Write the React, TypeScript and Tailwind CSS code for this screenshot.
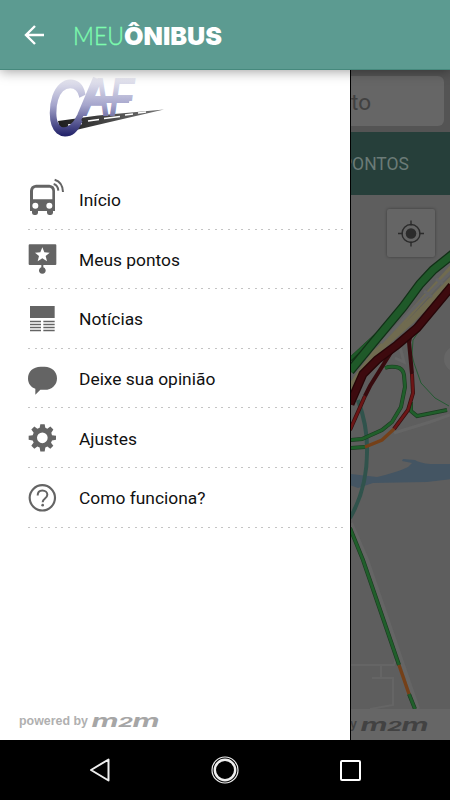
import type { ReactNode } from 'react'

interface IconProps {
	viewBox: string
	children: ReactNode
}

const MenuIcon = ({ viewBox, children }: Readonly<IconProps>) => (
	<svg
		className="h-12 w-10 shrink-0 fill-[#646464]"
		viewBox={viewBox}
		aria-hidden="true"
	>
		{children}
	</svg>
)

const BusIcon = () => (
	<MenuIcon viewBox="36 18 120 144">
		<path
			fillRule="evenodd"
			d="M63 44H103Q120 46 120 62V123H114V129Q113 135 107 135H103Q97 135 96 129V123H69V129Q68 135 62 135H58Q52 135 51 129V123H45V62Q46 46 63 44ZM61 53Q54 54 54 62V88H112V62Q111 54 105 53ZM61 98A9 9 0 1 0 61 116A9 9 0 1 0 61 98ZM103 98A9 9 0 1 0 103 116A9 9 0 1 0 103 98Z"
		/>
		<path
			d="M119 29Q143 36 144 66M116 42Q129 46 130 62"
			fill="none"
			stroke="#646464"
			strokeWidth="6"
		/>
	</MenuIcon>
)

const StopIcon = () => (
	<MenuIcon viewBox="36 196 120 144">
		<path
			fillRule="evenodd"
			d="M44 224H121Q124 224 124 227V283Q124 286 121 286H85V293A10 10 0 1 1 79 293V286H44Q41 286 41 283V227Q41 224 44 224ZM82 233L76 248L60 249L72 259L68 275L82 266L96 275L92 259L104 249L88 248Z"
		/>
	</MenuIcon>
)

const NewsIcon = () => (
	<MenuIcon viewBox="36 16 120 144">
		<path d="M45 49H119V85H45ZM45 93H78V97.5H45ZM85 93H119V97.5H85ZM45 102H78V106.5H45ZM85 102H119V106.5H85ZM45 111H78V115.5H45ZM85 111H119V115.5H85ZM45 120H78V124.5H45ZM85 120H119V124.5H85Z" />
	</MenuIcon>
)

const BubbleIcon = () => (
	<MenuIcon viewBox="36 195.5 120 144">
		<path d="M77 231H89C110 231 126 246 126 265C126 285 111 300 89 300H76L61 315V297C47 292 39 280 39 266C39 246 54 231 77 231Z" />
	</MenuIcon>
)

const GearIcon = () => (
	<MenuIcon viewBox="36 12.6 120 144">
		<path
			fillRule="evenodd"
			d="M76 43H89L91 54L97 57L106 50L115 59L109 69L111 76L123 78V90L111 92L108 99L115 108L106 117L97 110L91 113L89 125H76L74 113L67 110L58 117L49 108L56 98L53 92L41 90V78L53 76L56 69L49 59L58 50L67 57L74 54ZM82 68A16 16 0 1 0 82 100A16 16 0 1 0 82 68Z"
		/>
	</MenuIcon>
)

const HelpIcon = () => (
	<MenuIcon viewBox="36 191.4 120 144">
		<g fill="none" stroke="#646464">
			<circle cx="82" cy="263" r="38" strokeWidth="6.5" />
			<path
				d="M68 256C68 246 74 241 82 241C91 241 97 247 97 254C97 265 83 265 83 276"
				strokeWidth="6"
			/>
		</g>
		<circle cx="83" cy="285" r="4" />
	</MenuIcon>
)

const items = [
	{ label: 'Início', icon: <BusIcon /> },
	{ label: 'Meus pontos', icon: <StopIcon /> },
	{ label: 'Notícias', icon: <NewsIcon /> },
	{ label: 'Deixe sua opinião', icon: <BubbleIcon /> },
	{ label: 'Ajustes', icon: <GearIcon /> },
	{ label: 'Como funciona?', icon: <HelpIcon /> },
]

const Header = () => (
	<header className="relative z-10 flex h-[70px] shrink-0 items-center border-b border-[#46897d] bg-[#5c9b91] pl-6 shadow-[0_1px_12px_rgba(0,0,0,0.4)]">
		<svg
			className="h-5 w-5"
			viewBox="0 0 20 20"
			fill="none"
			stroke="#fff"
			strokeWidth="2.4"
			aria-hidden="true"
		>
			<path d="M20 10H2M11 1L2 10L11 19" />
		</svg>
		<svg
			className="ml-[30px] h-10 w-[150px] overflow-visible"
			viewBox="0 0 150 40"
		>
			<text
				x="-1"
				y="29.5"
				textLength="51"
				lengthAdjust="spacingAndGlyphs"
				stroke="#7dfcae"
				strokeWidth="0.4"
				className="fill-[#7dfcae] font-['Lato'] text-[25.5px] font-light"
			>
				MEU
			</text>
			<text
				x="50"
				y="29.5"
				textLength="98"
				lengthAdjust="spacingAndGlyphs"
				className="fill-white font-['Inter'] text-[25px] font-black"
			>
				ÔNIBUS
			</text>
		</svg>
	</header>
)

const CompanyLogo = () => (
	<svg
		className="ml-12 h-[100px] w-[120px] overflow-visible"
		viewBox="48 70 120 100"
	>
		<defs>
			<linearGradient
				id="letters"
				gradientUnits="userSpaceOnUse"
				x1="0"
				y1="76"
				x2="0"
				y2="135"
			>
				<stop offset="0" stopColor="#f0f0f6" />
				<stop offset="0.5" stopColor="#a4a4cb" />
				<stop offset="1" stopColor="#24246b" />
			</linearGradient>
			<linearGradient id="road">
				<stop offset="0" stopColor="#1c1c1c" />
				<stop offset="1" stopColor="#777" />
			</linearGradient>
		</defs>
		<path d="M58 121L98 115.5L164 109.5L110 122L76 130L60 130Z" fill="url(#road)" />
		<path
			d="M68 125L82 123.5M88 121L99 119.5M104 118.5L120 116.5M125 115L133 114M138 113L146 112"
			stroke="#fff"
			strokeWidth="1.3"
		/>
		{/* swoosh that ties the C to the A, and the bar shared by A and F */}
		<path
			d="M96 78L80 116Q73 131 61 131"
			fill="none"
			stroke="url(#letters)"
			strokeWidth="6"
		/>
		<path d="M91 96H130L129 103H89Z" fill="url(#letters)" />
		<text
			y="134"
			fill="url(#letters)"
			stroke="url(#letters)"
			className="font-['Liberation_Sans'] italic"
		>
			<tspan
				x="48"
				textLength="36"
				lengthAdjust="spacingAndGlyphs"
				strokeWidth="3"
				className="text-[76px]"
			>
				C
			</tspan>
			<tspan
				x="84"
				y="115"
				textLength="49"
				lengthAdjust="spacingAndGlyphs"
				strokeWidth="2"
				className="text-[52px]"
			>
				AF
			</tspan>
		</text>
	</svg>
)

const Brand = ({ className }: Readonly<{ className: string }>) => (
	<svg className={`h-4 w-[68px] overflow-visible ${className}`} viewBox="0 0 68 16">
		<text y="13.5" className="font-['Inter'] font-bold italic">
			<tspan
				x="-0.5"
				textLength="27"
				lengthAdjust="spacingAndGlyphs"
				className="text-[17.5px]"
			>
				m
			</tspan>
			<tspan
				x="26"
				textLength="15"
				lengthAdjust="spacingAndGlyphs"
				className="text-[13.5px]"
			>
				2
			</tspan>
			<tspan
				x="40.5"
				textLength="27"
				lengthAdjust="spacingAndGlyphs"
				className="text-[17.5px]"
			>
				m
			</tspan>
		</text>
	</svg>
)

const Drawer = () => (
	<aside className="flex w-[350px] shrink-0 flex-col bg-white">
		<CompanyLogo />
		<nav>
			{items.map((item) => (
				<div key={item.label} className="flex h-[59.6px] flex-col pl-7">
					<div className="-ml-px flex min-h-0 flex-1 items-center gap-3 pt-px">
						{item.icon}
						<span className="pt-px text-[17.4px] text-[#111]">
							{item.label}
						</span>
					</div>
					<div className="h-px w-[316px] bg-[repeating-linear-gradient(90deg,#c4c4c4_0_2px,transparent_2px_6.67px)]" />
				</div>
			))}
		</nav>
		<footer className="mt-auto flex h-[38px] items-center gap-1 pl-[19px]">
			<span className="w-[69px] font-['Liberation_Sans'] text-[12.4px] font-bold whitespace-nowrap text-[#b0b0b0]">
				powered by
			</span>
			<Brand className="fill-[#a6a6a6]" />
		</footer>
	</aside>
)

const TrafficMap = () => (
	<svg
		className="block h-[514px] w-[100px]"
		viewBox="351 195 100 514"
		fill="none"
	>
		<path
			d="M350 474L377 477Q398 472 408 467L412 463L402 461L403 459L415 460Q420 463 430 464H452V479L427 482L373 483L358 488L350 485Z"
			fill="#445563"
		/>
		<g stroke="#656565">
			<path d="M351 523L367 560L418 709" strokeWidth="4" />
			<path
				d="M350 665H394L398 652M381 666V678M372 678H393V705L370 709"
				strokeWidth="2"
			/>
			<path d="M394 433L430 422L450 415M400 347L404 362L395 358" strokeWidth="3" />
		</g>
		<circle cx="457" cy="359" r="13" fill="#666" />
		<path
			d="M350 395Q354 379 367 363L400 325L452 267"
			stroke="#706b50"
			strokeWidth="5"
		/>
		<path
			d="M352 385L375 353L412 320L452 279"
			stroke="#706b50"
			strokeWidth="6"
		/>
		<path
			d="M381 343L410 312L452 271M424 291L432 297M436 279L443 284"
			stroke="#646464"
			strokeWidth="3"
		/>
		<path
			d="M358 400Q367 425 367 447Q368 487 350 518"
			stroke="#30534c"
			strokeWidth="4"
		/>
		<path d="M350 360L377 335" stroke="#123d18" strokeWidth="5" />
		<path d="M350 359L377 334" stroke="#1f5929" strokeWidth="3" />
		<path
			d="M350 371L373 343L403 307L420 284L433 270L453 254"
			stroke="#123017"
			strokeWidth="9.5"
		/>
		<path
			d="M350 371L373 343L403 307L420 284L433 270L453 254"
			stroke="#1f5929"
			strokeWidth="7"
		/>
		<path
			d="M421 328L413 340L412 355L414 363L421 383L435 398L449 406"
			stroke="#245a32"
			strokeWidth="1"
		/>
		<g stroke="#1b3b20" strokeWidth="4">
			<path d="M385 368Q390 366 396 367Q403 368 404 375L405 387L401 407L392 422L382 430L362 439L350 440" />
			<path d="M411 402V411L417 416L447 410" />
			<path d="M350 448L365 447" />
			<path d="M350 528L363 560L399 665M409 694L415 709" />
		</g>
		<g stroke="#205f2b" strokeWidth="2.8">
			<path d="M385 368Q390 366 396 367Q403 368 404 375L405 387L401 407L392 422L382 430L362 439L350 440" />
			<path d="M411 402V411L417 416L447 410" />
			<path d="M350 448L365 447" />
			<path d="M350 528L363 560L399 665M409 694L415 709" />
		</g>
		<path
			d="M412 374L413 393L408 410L394 429M365 396L350 430"
			stroke="#361010"
			strokeWidth="4"
		/>
		<path
			d="M412 374L413 393L408 410L394 429M365 396L350 430"
			stroke="#6d1616"
			strokeWidth="2.6"
		/>
		<path
			d="M394 429L382 440L365 447M399 665L409 694"
			stroke="#754018"
			strokeWidth="3.4"
		/>
		<path
			d="M395 346L370 386L365 396M411 333L409 342L412 374"
			stroke="#370b0e"
			strokeWidth="4"
		/>
		<path
			d="M350 404L363 374L377 360L397 345L417 328L452 286"
			stroke="#260608"
			strokeWidth="9"
		/>
		<path
			d="M350 404L363 374L377 360L397 345L417 328L452 286"
			stroke="#3d0a0e"
			strokeWidth="6.5"
		/>
	</svg>
)

const LocateButton = () => (
	<div className="absolute top-3.5 right-[15px] flex h-12 w-12 items-center justify-center rounded-xs bg-[#656565] shadow-[0_0_3px_rgba(0,0,0,0.4)]">
		<svg
			className="h-7 w-7"
			viewBox="0 0 28 28"
			fill="none"
			stroke="#2b2b2b"
			strokeWidth="1.4"
			aria-hidden="true"
		>
			<circle cx="14" cy="14.5" r="9" />
			<circle cx="14" cy="14.5" r="5.3" fill="#2b2b2b" stroke="none" />
			<path d="M14 1.5V6.5M14 22.5V27.5M1 14.5H6M22 14.5H27" />
		</svg>
	</div>
)

// Part of the main screen that stays visible, dimmed, beside the drawer
const DimmedScreen = () => (
	<main className="flex w-[100px] shrink-0 flex-col overflow-hidden border-l border-black bg-[#5e5e5e]">
		<div className="flex h-[62px] shrink-0 bg-[#545454] pt-1.5 pr-1.5">
			<div className="flex h-[50px] flex-1 items-center rounded-r-md bg-[#666] pt-1">
				<span className="text-[22.5px] text-[#414141]">to</span>
			</div>
		</div>
		<div className="flex h-[63px] shrink-0 items-center justify-end bg-[#263f3a] pt-0.5 pr-[41px]">
			<span className="text-[17.5px] text-[#6b7b77]">PONTOS</span>
		</div>
		<div className="relative h-[514px] shrink-0">
			<TrafficMap />
			<LocateButton />
		</div>
		<footer className="flex h-[31px] items-center justify-end gap-1 bg-[#666] pr-[21px]">
			<span className="font-['Liberation_Sans'] text-[12.4px] font-bold whitespace-nowrap text-[#444]">
				powered by
			</span>
			<Brand className="shrink-0 fill-[#424242]" />
		</footer>
	</main>
)

const SystemBar = () => (
	<div className="flex h-[60px] shrink-0 items-center justify-center bg-black">
		<div className="flex w-[125px] justify-center">
			<svg className="h-7 w-7" viewBox="0 0 28 28" fill="none" stroke="#eee">
				<path d="M22.5 3.5V24.5L5 14Z" strokeWidth="2" strokeLinejoin="round" />
			</svg>
		</div>
		<div className="flex w-[125px] justify-center">
			<svg className="h-7 w-7" viewBox="0 0 28 28" fill="none" stroke="#eee">
				<circle cx="14" cy="14" r="13" strokeWidth="1.2" />
				<circle cx="14" cy="14" r="10.2" strokeWidth="2.4" />
			</svg>
		</div>
		<div className="flex w-[125px] justify-center">
			<div className="h-[21px] w-[21px] rounded-xs border-2 border-white" />
		</div>
	</div>
)

export default function App() {
	return (
		<div className="flex h-[800px] w-[450px] flex-col overflow-hidden font-['Roboto',sans-serif]">
			<Header />
			<div className="flex min-h-0 flex-1">
				<Drawer />
				<DimmedScreen />
			</div>
			<SystemBar />
		</div>
	)
}
